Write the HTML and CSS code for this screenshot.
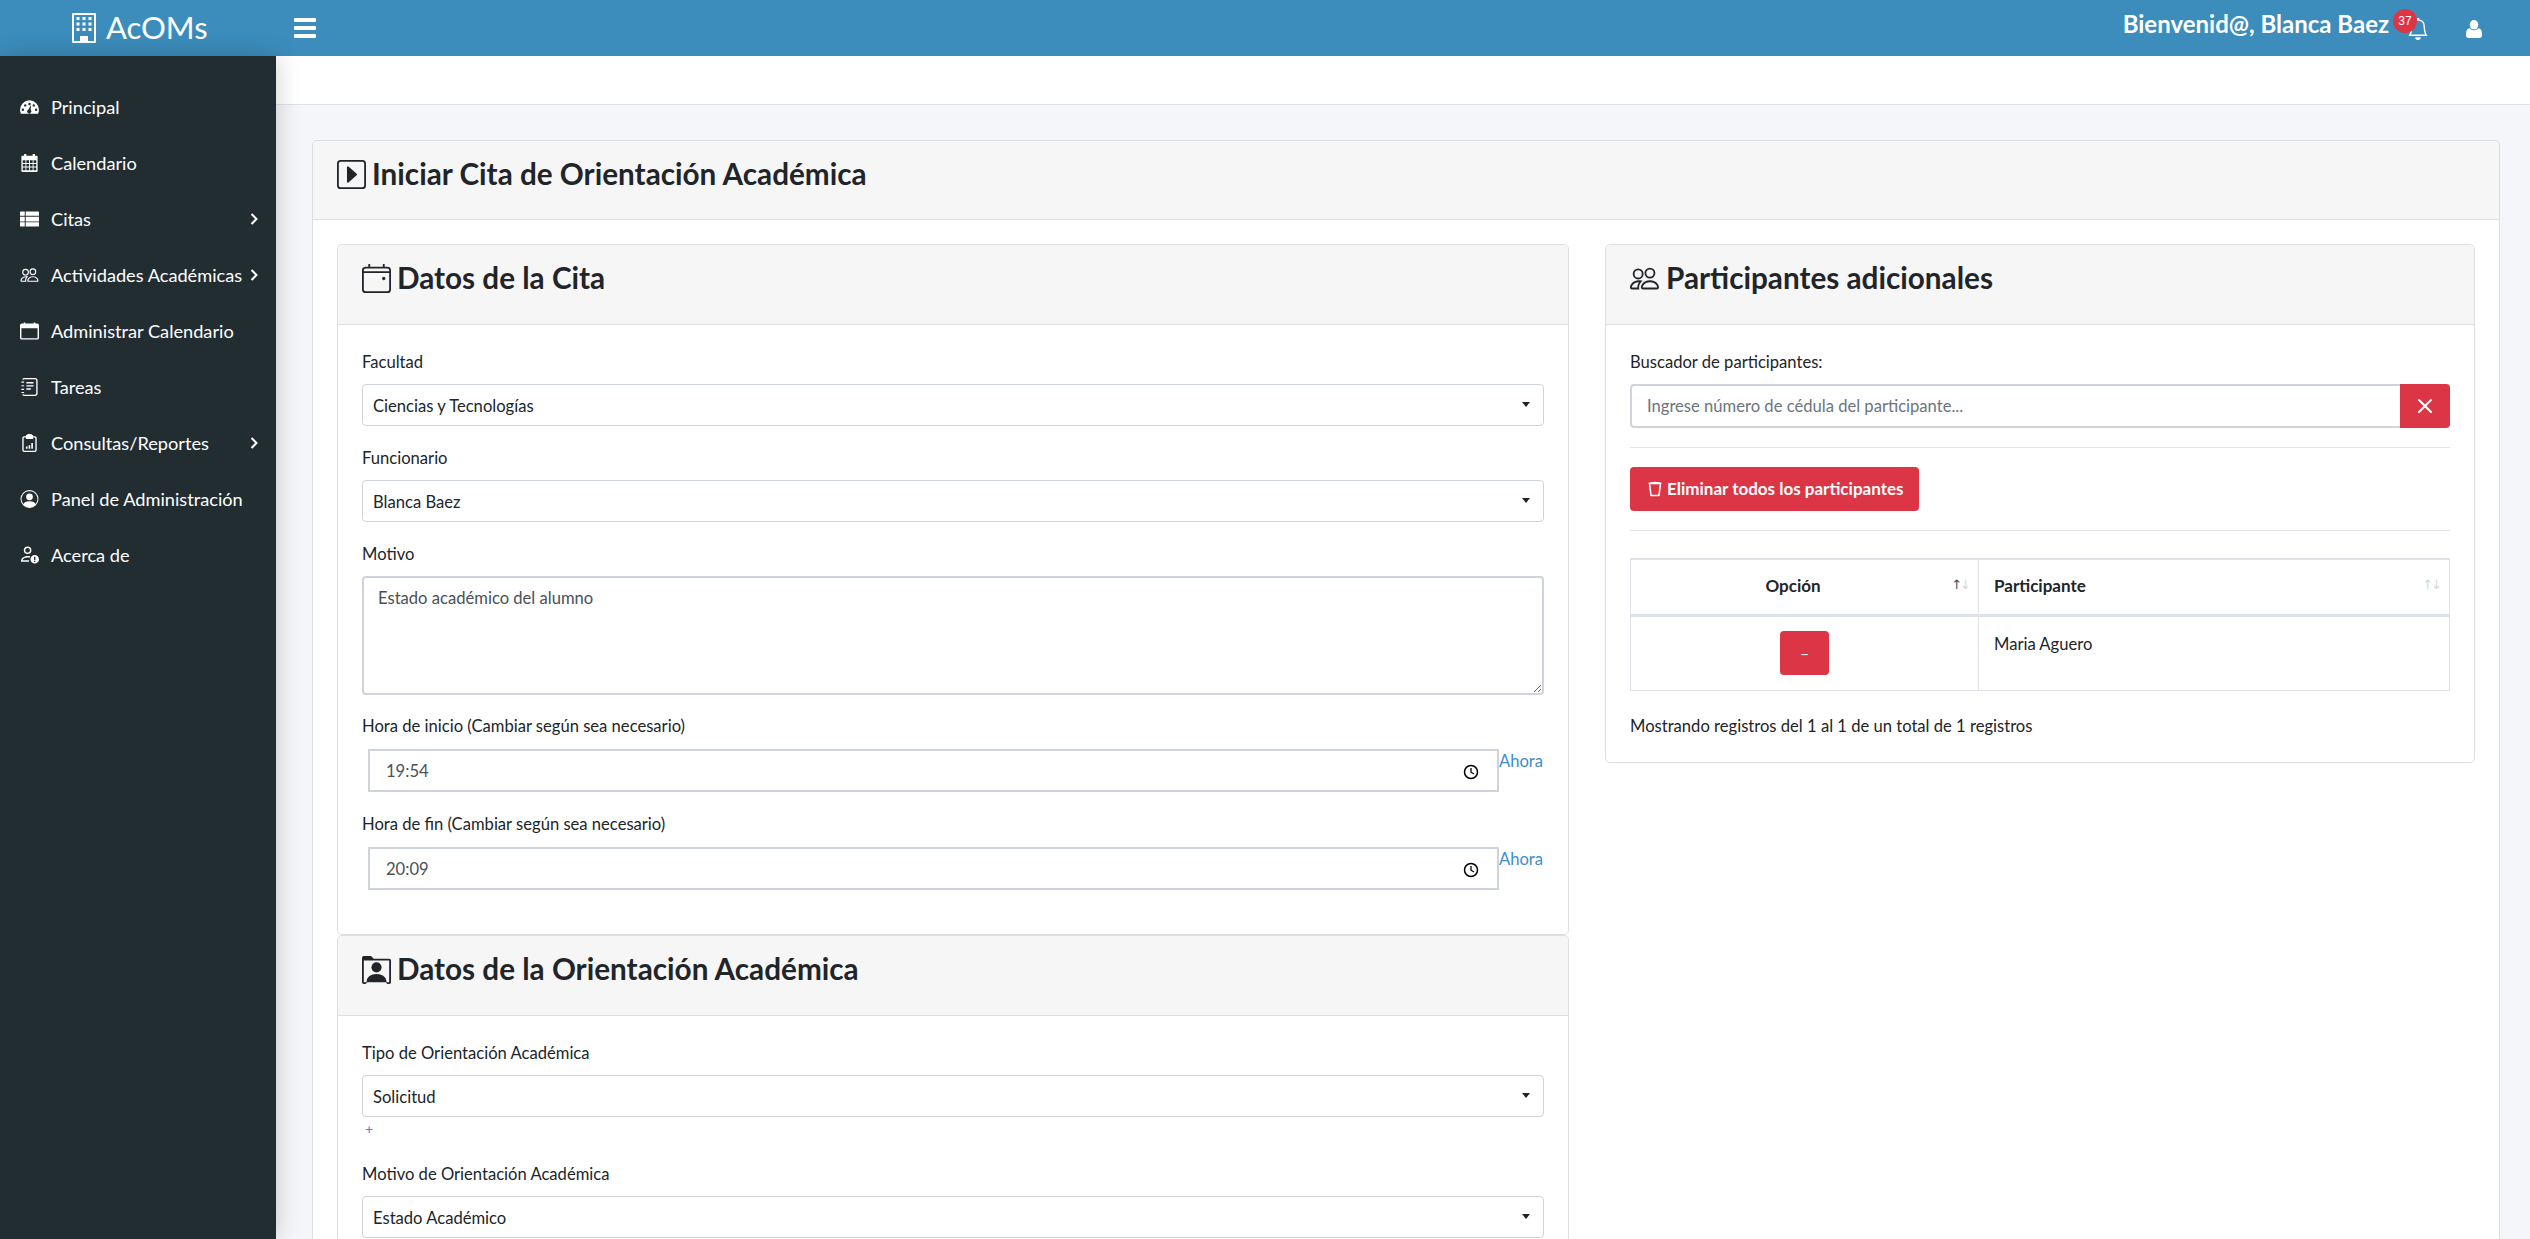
FILE: index.html
```html
<!DOCTYPE html>
<html lang="es">
<head>
<meta charset="utf-8">
<title>AcOMs</title>
<link rel="stylesheet" href="styles.css">
</head>
<body>
<header class="topbar">
  <div class="brand">
    <svg class="brand-icon" viewBox="0 0 24 30"><path fill="#fff" fill-rule="evenodd" d="M1 0h22a1 1 0 0 1 1 1v28a1 1 0 0 1-1 1H1a1 1 0 0 1-1-1V1a1 1 0 0 1 1-1zm1 2v26h6v-5h8v5h6V2z"/><path fill="#fff" d="M4.500 4h3v3h-3zM10.500 4h3v3h-3zM16.500 4h3v3h-3zM4.500 9.500h3v3h-3zM10.500 9.500h3v3h-3zM16.500 9.500h3v3h-3zM4.500 15h3v3h-3zM10.500 15h3v3h-3zM16.500 15h3v3h-3z"/></svg>
    <span class="brand-name">AcOMs</span>
  </div>
  <div class="burger"><i></i><i></i><i></i></div>
  <div class="welcome">Bienvenid@, Blanca Baez</div>
  <div class="bell">
    <svg viewBox="0 0 16 16" fill="#fff"><path d="M8 16a2 2 0 0 0 2-2H6a2 2 0 0 0 2 2zM8 1.918l-.797.161A4.002 4.002 0 0 0 4 6c0 .628-.134 2.197-.459 3.742-.16.767-.376 1.566-.663 2.258h10.244c-.287-.692-.502-1.49-.663-2.258C12.134 8.197 12 6.628 12 6a4.002 4.002 0 0 0-3.203-3.92L8 1.917zM14.22 12c.223.447.481.801.78 1H1c.299-.199.557-.553.78-1C2.68 10.2 3 6.88 3 6c0-2.42 1.72-4.44 4.005-4.901a1 1 0 1 1 1.99 0A5.002 5.002 0 0 1 13 6c0 .88.32 4.2 1.22 6z"/></svg>
    <span class="badge">37</span>
  </div>
  <svg class="user" viewBox="0 0 16 18" fill="#fff"><ellipse cx="8" cy="4.800" rx="4.300" ry="4.800"/><path d="M3.500 8c1 1.500 2.700 2.300 4.500 2.300S11.500 9.500 12.500 8c2 .5 3.500 2.500 3.500 5.500v2c0 1.500-1 2.500-2.500 2.500h-11C1 18 0 17 0 15.500v-2C0 10.500 1.500 8.500 3.500 8z"/></svg>
</header>
<div class="layout">
  <nav class="sidebar">
    <a class="nav-item"><svg class="nav-icon" viewBox="0 0 20 16" fill="#fff"><path fill-rule="evenodd" d="M10 1a10 10 0 0 1 10 10c0 1.500-.4 2.900-1 4H1c-.6-1.100-1-2.500-1-4A10 10 0 0 1 10 1zm0 2.500a1.300 1.300 0 1 0 0 2.600 1.300 1.300 0 0 0 0-2.600zM5.500 5a1.300 1.300 0 1 0 0 2.600A1.300 1.300 0 0 0 5.500 5zm9 0a1.300 1.300 0 1 0 0 2.600 1.300 1.300 0 0 0 0-2.600zM3 9.500a1.300 1.300 0 1 0 0 2.600 1.300 1.300 0 0 0 0-2.600zm14 0a1.300 1.300 0 1 0 0 2.600 1.300 1.300 0 0 0 0-2.600zM11.500 6 9 10.500a2.200 2.200 0 1 0 2.400.6z"/></svg><span>Principal</span></a>
    <a class="nav-item"><svg class="nav-icon" viewBox="0 0 18 20" fill="#fff"><path fill-rule="evenodd" d="M3 0h2.500v2h7V0H15v2h2a1 1 0 0 1 1 1v16a1 1 0 0 1-1 1H1a1 1 0 0 1-1-1V3a1 1 0 0 1 1-1h2zM1.500 7v3h3V7zm4 0v3h3V7zm4 0v3h3V7zm4 0v3h3V7zm-12 4v3h3v-3zm4 0v3h3v-3zm4 0v3h3v-3zm4 0v3h3v-3zm-12 4v3h3v-3zm4 0v3h3v-3zm4 0v3h3v-3zm4 0v3h3v-3z"/></svg><span>Calendario</span></a>
    <a class="nav-item"><svg class="nav-icon" viewBox="0 0 20 16" fill="#fff"><path d="M0 1a1 1 0 0 1 1-1h4v4.500H0zM6 0h13a1 1 0 0 1 1 1v3.500H6zM0 5.500h5v5H0zM6 5.500h14v5H6zM0 11.500h5V16H1a1 1 0 0 1-1-1zM6 11.500h14V15a1 1 0 0 1-1 1H6z"/></svg><span>Citas</span><svg class="chev" viewBox="0 0 8 12"><path d="M1.500 1 6.500 6l-5 5" fill="none" stroke="#fff" stroke-width="2"/></svg></a>
    <a class="nav-item"><svg class="nav-icon" viewBox="0 0 16 16" fill="#fff"><path d="M15 14s1 0 1-1-1-4-5-4-5 3-5 4 1 1 1 1h8zm-7.978-1A.261.261 0 0 1 7 12.996c.001-.264.167-1.03.76-1.72C8.312 10.629 9.282 10 11 10c1.717 0 2.687.63 3.24 1.276.593.69.758 1.457.76 1.72l-.008.002a.274.274 0 0 1-.014.002H7.022zM11 7a2 2 0 1 0 0-4 2 2 0 0 0 0 4zm3-2a3 3 0 1 1-6 0 3 3 0 0 1 6 0zM6.936 9.280a5.880 5.880 0 0 0-1.230-.247A7.350 7.350 0 0 0 5 9c-4 0-5 3-5 4 0 .667.333 1 1 1h4.216A2.238 2.238 0 0 1 5 13c0-1.010.377-2.042 1.090-2.904.243-.294.526-.569.846-.816zM4.920 10A5.493 5.493 0 0 0 4 13H1c0-.260.164-1.030.760-1.724.545-.636 1.492-1.256 3.160-1.275zM1.500 5.500a3 3 0 1 1 6 0 3 3 0 0 1-6 0zm3-2a2 2 0 1 0 0 4 2 2 0 0 0 0-4z"/></svg><span>Actividades Académicas</span><svg class="chev" viewBox="0 0 8 12"><path d="M1.500 1 6.500 6l-5 5" fill="none" stroke="#fff" stroke-width="2"/></svg></a>
    <a class="nav-item"><svg class="nav-icon" viewBox="0 0 20 18" fill="#fff"><path fill-rule="evenodd" d="M2 1h16a2 2 0 0 1 2 2v13a2 2 0 0 1-2 2H2a2 2 0 0 1-2-2V3a2 2 0 0 1 2-2zm-.5 5v10a.5.5 0 0 0 .5.5h16a.5.500 0 0 0 .5-.5V6z"/><path d="M4 0h1.500v2H4zM14.500 0H16v2h-1.500z"/></svg><span>Administrar Calendario</span></a>
    <a class="nav-item"><svg class="nav-icon" viewBox="0 0 18 20" fill="#fff"><path fill-rule="evenodd" d="M3 0h12a3 3 0 0 1 3 3v14a3 3 0 0 1-3 3H3a2 2 0 0 1-2-2h1.500c0 .3.200.5.500.500h12a1.500 1.500 0 0 0 1.500-1.500V3A1.500 1.500 0 0 0 15 1.500H3c-.3 0-.5.2-.5.5H1a2 2 0 0 1 2-2z"/><path d="M5.500 4.500h8V6h-8zM5.500 8h8v1.500h-8zM5.500 11.500h5V13h-5zM0 4h3v1.300H0zM0 8h3v1.300H0zM0 12h3v1.300H0zM0 15.500h3v1.300H0z"/></svg><span>Tareas</span></a>
    <a class="nav-item"><svg class="nav-icon nav-icon-narrow" viewBox="0 0 16 20" fill="#fff"><path fill-rule="evenodd" d="M4 1h1.500a2.500 2 0 0 1 5 0H12v1.500h2A2 2 0 0 1 16 4.500v13.500a2 2 0 0 1-2 2H2a2 2 0 0 1-2-2V4.500a2 2 0 0 1 2-2h2zM2 4a.5.5 0 0 0-.5.500V18a.5.500 0 0 0 .5.500h12a.5.500 0 0 0 .5-.5V4.500A.5.500 0 0 0 14 4h-2v1.500H4V4z"/><path d="M4 14h1.800v2.500H4zM7 12.500h1.800v4H7zM10 10h1.800v6.500H10z"/></svg><span>Consultas/Reportes</span><svg class="chev" viewBox="0 0 8 12"><path d="M1.500 1 6.500 6l-5 5" fill="none" stroke="#fff" stroke-width="2"/></svg></a>
    <a class="nav-item"><svg class="nav-icon" viewBox="0 0 16 16" fill="#fff"><path d="M11 6a3 3 0 1 1-6 0 3 3 0 0 1 6 0z"/><path fill-rule="evenodd" d="M0 8a8 8 0 1 1 16 0A8 8 0 0 1 0 8zm8-7a7 7 0 0 0-5.468 11.370C3.242 11.226 4.805 10 8 10s4.757 1.225 5.468 2.370A7 7 0 0 0 8 1z"/></svg><span>Panel de Administración</span></a>
    <a class="nav-item"><svg class="nav-icon" viewBox="0 0 20 18" fill="#fff"><path fill-rule="evenodd" d="M8 0a4 4 0 1 1 0 8 4 4 0 0 1 0-8zm0 1.500a2.500 2.500 0 1 0 0 5 2.500 2.500 0 0 0 0-5zM8 10c1 0 2 .1 2.800.4l-.6 1.400c-.7-.2-1.400-.3-2.200-.3-3 0-5 1.200-5.500 3h7v1.500H1c0-3.700 3-6 7-6z"/><path fill-rule="evenodd" d="M15.500 9a4.500 4.500 0 1 1 0 9 4.500 4.500 0 0 1 0-9zm-.7 1.800v3.400h1.400v-3.400zm0 4.200v1.400h1.400V15z"/></svg><span>Acerca de</span></a>
  </nav>
  <main class="main">
    <div class="subbar"></div>
    <div class="content">
      <section class="card outer">
        <div class="card-head">
          <h2><svg class="head-icon" viewBox="0 0 16 16" fill="#212529"><path d="M14 1a1 1 0 0 1 1 1v12a1 1 0 0 1-1 1H2a1 1 0 0 1-1-1V2a1 1 0 0 1 1-1h12zM2 0a2 2 0 0 0-2 2v12a2 2 0 0 0 2 2h12a2 2 0 0 0 2-2V2a2 2 0 0 0-2-2H2z"/><path d="M5.795 12.456A.5.5 0 0 1 5.500 12V4a.5.5 0 0 1 .832-.374l4.500 4a.5.5 0 0 1 0 .748l-4.500 4a.5.5 0 0 1-.537.082z"/></svg>Iniciar Cita de Orientación Académica</h2>
        </div>
        <div class="outer-body">
          <div class="left-col">
            <section class="card inner">
              <div class="card-head">
                <h2><svg class="head-icon" viewBox="0 0 16 16" fill="#212529"><path fill-rule="evenodd" d="M2 1.500h12a2 2 0 0 1 2 2V14a2 2 0 0 1-2 2H2a2 2 0 0 1-2-2V3.500a2 2 0 0 1 2-2zM1 5v9a1 1 0 0 0 1 1h12a1 1 0 0 0 1-1V5zm1-2.500a1 1 0 0 0-1 1V4h14v-.5a1 1 0 0 0-1-1z"/><path d="M3.500 0h1v2h-1zM11.500 0h1v2h-1z"/><circle cx="12" cy="8" r=".9"/></svg>Datos de la Cita</h2>
              </div>
              <div class="card-body">
                <label class="lbl">Facultad</label>
                <div class="select">Ciencias y Tecnologías</div>
                <label class="lbl">Funcionario</label>
                <div class="select">Blanca Baez</div>
                <label class="lbl">Motivo</label>
                <textarea class="area">Estado académico del alumno</textarea>
                <label class="lbl lbl-time">Hora de inicio (Cambiar según sea necesario)</label>
                <div class="time-row">
                  <div class="time"><span>19:54</span><svg class="clock" viewBox="0 0 16 16"><circle cx="8" cy="8" r="6.500" fill="none" stroke="#000" stroke-width="1.500"/><path d="M8 4v4.200l3 1.800" fill="none" stroke="#000" stroke-width="1.300"/></svg></div>
                  <a class="now">Ahora</a>
                </div>
                <label class="lbl lbl-time">Hora de fin (Cambiar según sea necesario)</label>
                <div class="time-row">
                  <div class="time"><span>20:09</span><svg class="clock" viewBox="0 0 16 16"><circle cx="8" cy="8" r="6.500" fill="none" stroke="#000" stroke-width="1.500"/><path d="M8 4v4.200l3 1.800" fill="none" stroke="#000" stroke-width="1.300"/></svg></div>
                  <a class="now">Ahora</a>
                </div>
              </div>
            </section>
            <section class="card inner">
              <div class="card-head">
                <h2><svg class="head-icon" viewBox="0 0 16 16" fill="#212529"><path fill-rule="evenodd" d="M0 1.500A1 1 0 0 1 1 .5h4l1.500 1.500H15a1 1 0 0 1 1 1V15a1 1 0 0 1-1 1h-1l-1-1H3l-1 1H1a1 1 0 0 1-1-1zM1 3v12h14V3z"/><circle cx="8" cy="6.800" r="2.800"/><path d="M2.500 15c0-3 2.500-4.500 5.500-4.500s5.500 1.500 5.500 4.500z"/></svg>Datos de la Orientación Académica</h2>
              </div>
              <div class="card-body">
                <label class="lbl">Tipo de Orientación Académica</label>
                <div class="select select-tight">Solicitud</div>
                <a class="plus">+</a>
                <label class="lbl">Motivo de Orientación Académica</label>
                <div class="select">Estado Académico</div>
              </div>
            </section>
          </div>
          <section class="card inner">
            <div class="card-head">
              <h2><svg class="head-icon head-icon-wide" viewBox="0 0 16 16" fill="#212529"><path d="M15 14s1 0 1-1-1-4-5-4-5 3-5 4 1 1 1 1h8zm-7.978-1A.261.261 0 0 1 7 12.996c.001-.264.167-1.030.760-1.720C8.312 10.629 9.282 10 11 10c1.717 0 2.687.630 3.240 1.276.593.690.758 1.457.760 1.720l-.008.002a.274.274 0 0 1-.014.002H7.022zM11 7a2 2 0 1 0 0-4 2 2 0 0 0 0 4zm3-2a3 3 0 1 1-6 0 3 3 0 0 1 6 0zM6.936 9.280a5.880 5.880 0 0 0-1.230-.247A7.350 7.350 0 0 0 5 9c-4 0-5 3-5 4 0 .667.333 1 1 1h4.216A2.238 2.238 0 0 1 5 13c0-1.010.377-2.042 1.090-2.904.243-.294.526-.569.846-.816zM4.920 10A5.493 5.493 0 0 0 4 13H1c0-.260.164-1.030.760-1.724.545-.636 1.492-1.256 3.160-1.275zM1.500 5.500a3 3 0 1 1 6 0 3 3 0 0 1-6 0zm3-2a2 2 0 1 0 0 4 2 2 0 0 0 0-4z"/></svg>Participantes adicionales</h2>
            </div>
            <div class="card-body">
              <label class="lbl">Buscador de participantes:</label>
              <div class="search">
                <input class="search-input" type="text" placeholder="Ingrese número de cédula del participante...">
                <button class="search-clear"><svg viewBox="0 0 16 16" fill="#fff"><path d="M4.646 4.646a.5.5 0 0 1 .708 0L8 7.293l2.646-2.647a.5.5 0 0 1 .708.708L8.707 8l2.647 2.646a.5.5 0 0 1-.708.708L8 8.707l-2.646 2.647a.5.5 0 0 1-.708-.708L7.293 8 4.646 5.354a.5.5 0 0 1 0-.708z"/></svg></button>
              </div>
              <hr class="rule">
              <button class="btn-danger"><svg viewBox="0 0 14 16"><path d="M1.500 2.500h11L11 14.500H3z" fill="none" stroke="#fff" stroke-width="1.600" stroke-linejoin="round"/><path d="M1 3c1-2 11-2 12 0" fill="none" stroke="#fff" stroke-width="1.600"/></svg>Eliminar todos los participantes</button>
              <hr class="rule rule-table">
              <table class="grid">
                <thead>
                  <tr>
                    <th class="col-opt">Opción<span class="sort"><b>↑</b>↓</span></th>
                    <th class="col-part">Participante<span class="sort">↑↓</span></th>
                  </tr>
                </thead>
                <tbody>
                  <tr>
                    <td class="cell-opt"><button class="btn-minus">–</button></td>
                    <td>Maria Aguero</td>
                  </tr>
                </tbody>
              </table>
              <p class="info">Mostrando registros del 1 al 1 de un total de 1 registros</p>
            </div>
          </section>
        </div>
      </section>
    </div>
  </main>
</div>
</body>
</html>
```
FILE: styles.css
```css
* { box-sizing: border-box; }
html, body { margin: 0; height: 100%; overflow: hidden; }
body { font-family: Lato, "Noto Sans", sans-serif; font-size: 16.6px; line-height: 24px; color: #212529; background: #f4f6f9; }

.topbar { height: 56px; background: #3c8dbc; display: flex; align-items: center; color: #fff; }
.brand { width: 276px; display: flex; align-items: center; padding-left: 72px; flex: none; }
.brand-icon { width: 24px; height: 30px; }
.brand-name { font-size: 31px; margin-left: 10px; line-height: 40px; margin-top: -2px; }
.burger { width: 22px; display: flex; flex-direction: column; gap: 4px; margin-left: 18px; }
.burger i { display: block; height: 4px; background: #fff; border-radius: 1px; }
.welcome { margin-left: auto; font-size: 24px; font-weight: 700; margin-top: -9px; }
.bell { position: relative; width: 22px; height: 22px; margin-left: 18px; margin-top: 1px; }
.bell svg { width: 22px; height: 22px; display: block; }
.badge { position: absolute; left: -14px; top: -9px; width: 24px; height: 24px; border-radius: 50%; background: #dc3545; color: #fff; font: 12px/24px "Liberation Sans", sans-serif; text-align: center; }
.user { width: 16px; height: 20px; margin-left: 37px; margin-right: 48px; margin-top: 1px; }

.layout { display: flex; height: calc(100vh - 56px); }
.sidebar { width: 276px; flex: none; background: #222d32; padding-top: 23px; box-shadow: 0 0 24px rgba(0,0,0,.2); position: relative; z-index: 1; }
.nav-item { display: flex; align-items: center; height: 56px; padding: 0 18px 0 20px; color: #fff; font-size: 18.2px; }
.nav-icon { width: 19px; height: 18px; flex: none; margin-right: 12px; }
.nav-icon-narrow { padding: 0 1px; }
.chev { width: 8px; height: 12px; margin-left: auto; flex: none; }

.main { flex: 1; min-width: 0; }
.subbar { height: 49px; background: #fff; border-bottom: 1px solid #dee2e6; }
.content { padding: 35px 30px 0 36px; }

.card { background: #fff; border: 1px solid #dcdfe2; border-radius: 5px; }
.card-head { background: #f6f6f7; border-bottom: 1px solid #dcdfe2; padding: 16px 24px 28px; border-radius: 5px 5px 0 0; }
.inner > .card-head { padding-bottom: 29px; }
.card-head h2 { margin: 0; font-size: 29.7px; line-height: 34px; font-weight: 700; display: flex; align-items: center; }
.head-icon { width: 29px; height: 29px; margin-right: 6px; flex: none; }
.head-icon-wide { width: 29px; margin-right: 7px; }

.outer-body { padding: 24px 24px 0; display: grid; grid-template-columns: 1232px 870px; gap: 36px; align-items: start; }
.card-body { padding: 25px 24px 24px; }
.lbl { display: block; height: 24px; margin-bottom: 10px; }
.select { position: relative; height: 42px; border: 1px solid #ced4da; border-radius: 4px; padding: 9px 10px; margin-bottom: 20px; }
.select::after { content: ""; position: absolute; right: 13px; top: 17px; border: 4px solid transparent; border-top: 5px solid #222; border-bottom: 0; }
.card-body .select:last-child { margin-bottom: 0; }
.select-tight { margin-bottom: 0; }
.area { display: block; width: 100%; height: 119px; border: 2px solid #ced4da; border-radius: 4px; padding: 8px 14px; margin: 0 0 19px; font: inherit; color: #495057; }
.lbl-time { margin-bottom: 11px; }
.time-row { display: flex; margin: 0 0 20px 6px; align-items: flex-start; }
.time { width: 1131px; height: 43px; flex: none; border: 2px solid #ced4da; padding: 0 18px 0 16px; display: flex; align-items: center; justify-content: space-between; color: #495057; }
.clock { width: 16px; height: 16px; margin-top: 2px; }
.now { color: #3f8dc9; line-height: 24px; }
.plus { display: block; color: #3f8dc9; height: 24px; margin-bottom: 21px; padding-left: 3px; font-size: 14px; line-height: 24px; }

.search { display: flex; height: 44px; }
.search-input { flex: 1; min-width: 0; border: 2px solid #ced4da; border-right: 0; border-radius: 4px 0 0 4px; padding: 0 15px; font: inherit; color: #495057; outline: 0; }
.search-input::placeholder { color: #6c757d; opacity: 1; }
.search-clear { width: 50px; flex: none; border: 0; padding: 0; background: #dc3545; border-radius: 0 4px 4px 0; display: flex; align-items: center; justify-content: center; }
.search-clear svg { width: 32px; height: 32px; }
.rule { border: 0; border-top: 1px solid #e3e5e8; margin: 19px 0; height: 1px; }
.rule-table { margin-bottom: 27px; }
.btn-danger { display: flex; align-items: center; height: 44px; width: 289px; background: #dc3545; color: #fff; border: 0; border-radius: 4px; padding: 0 0 0 18px; font: 700 17px/24px Lato, sans-serif; }
.btn-danger svg { width: 14px; height: 16px; margin-right: 5px; }

.grid { width: 100%; border-collapse: collapse; table-layout: fixed; }
.grid th, .grid td { border: 1px solid #dee2e6; padding: 15px; vertical-align: top; text-align: left; }
.grid th { position: relative; height: 56px; padding-top: 14px; padding-bottom: 14px; border-top-width: 2px; border-bottom-width: 3px; font-weight: 700; font-size: 17px; }
.grid .col-opt { width: 348px; text-align: center; padding-right: 38px; }
.sort { position: absolute; right: 9px; top: 15px; font: 13px/20px "DejaVu Sans", sans-serif; letter-spacing: -2px; color: #d5d8db; }
.sort b { font-weight: 400; color: #495057; }
.grid .cell-opt { text-align: center; height: 75px; padding: 14px 0; }
.btn-minus { width: 49px; height: 44px; background: #dc3545; color: #fff; border: 0; border-radius: 4px; padding: 0; font: 16px/44px Lato, sans-serif; display: inline-block; vertical-align: top; }
.info { margin: 23px 0 0; height: 24px; }
```
